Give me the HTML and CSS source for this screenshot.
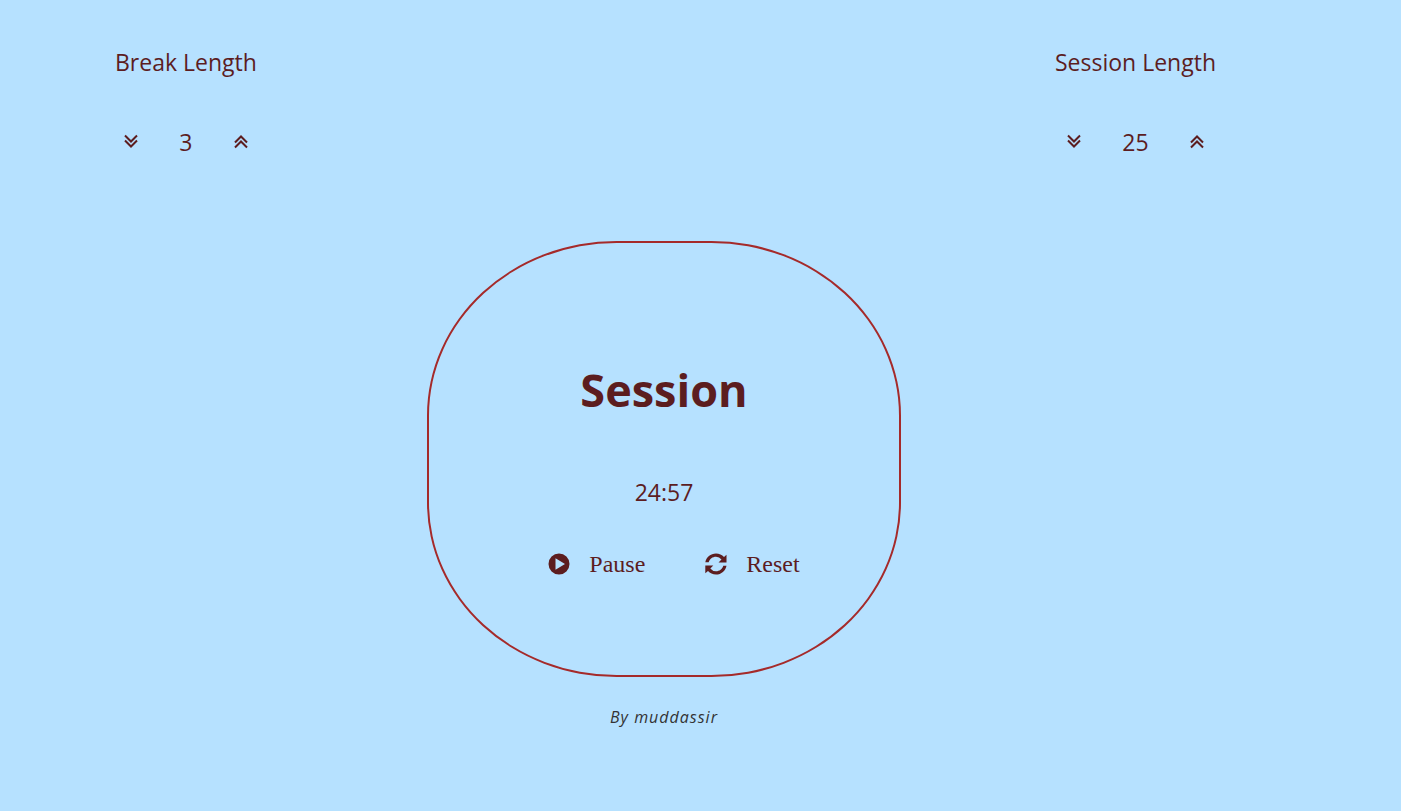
FILE: index.html
```html
<!DOCTYPE html>
<html lang="en">
<head>
<meta charset="utf-8">
<title>Session Timer</title>
<link rel="stylesheet" href="styles.css">
</head>
<body>
<header class="lengths">
  <section class="length">
    <h2 class="length-label">Break Length</h2>
    <div class="stepper">
      <button class="step" type="button" aria-label="Decrease break length"><svg class="chevrons" viewBox="0 0 16 16"><path d="M2 1.500l6 6 6-6M2 6.500l6 6 6-6"/></svg></button>
      <span class="value">3</span>
      <button class="step" type="button" aria-label="Increase break length"><svg class="chevrons" viewBox="0 0 16 16"><path d="M2 8.500l6-6 6 6M2 13.500l6-6 6 6"/></svg></button>
    </div>
  </section>
  <section class="length">
    <h2 class="length-label">Session Length</h2>
    <div class="stepper">
      <button class="step" type="button" aria-label="Decrease session length"><svg class="chevrons" viewBox="0 0 16 16"><path d="M2 1.500l6 6 6-6M2 6.500l6 6 6-6"/></svg></button>
      <span class="value">25</span>
      <button class="step" type="button" aria-label="Increase session length"><svg class="chevrons" viewBox="0 0 16 16"><path d="M2 8.500l6-6 6 6M2 13.500l6-6 6 6"/></svg></button>
    </div>
  </section>
</header>
<main class="timer">
  <h1 class="timer-label">Session</h1>
  <div class="time">24:57</div>
  <div class="controls">
    <button class="control" type="button"><svg class="icon" viewBox="0 0 22 22"><path fill-rule="evenodd" d="M11 .5a10.500 10.500 0 1 0 0 21 10.500 10.500 0 0 0 0-21zM7.500 5.200L17 11l-9.500 5.800z"/></svg>Pause</button>
    <button class="control" type="button"><svg class="icon" viewBox="0 0 22 22"><path d="M.3 9.300C1.200 4.200 5.600.5 11 .5c3.200 0 6 1.300 8 3.400l2.500-2.200v7.900h-8l3-3A7.600 7.600 0 0 0 11 3.800c-3.500 0-6.300 2.200-7.300 5.500zM21.500 12.700c-.9 5.100-5.100 8.800-10.500 8.800-3.200 0-6-1.300-8-3.400L.3 20.300v-7.900h8l-3 3a7.600 7.600 0 0 0 5.700 2.800c3.500 0 6.300-2.200 7.300-5.500z"/></svg>Reset</button>
  </div>
</main>
<footer class="credit">By muddassir</footer>
</body>
</html>
```
FILE: styles.css
```css
* {
  box-sizing: border-box;
}

body {
  margin: 0;
  padding: 44px 73px 0 0;
  background: #b6e1ff;
  color: #5c1d1f;
  font-family: "Segoe UI", "Open Sans", sans-serif;
  display: flex;
  flex-direction: column;
  align-items: center;
}

.lengths {
  width: 100%;
  padding: 0 112px 0 115px;
  display: flex;
  justify-content: space-between;
}

.length {
  display: flex;
  flex-direction: column;
  align-items: center;
  gap: 44px;
}

.length-label {
  margin: 0;
  font-size: 23px;
  line-height: 36px;
  font-weight: 400;
}

.stepper {
  display: flex;
  align-items: center;
  gap: 40px;
}

.step,
.control {
  padding: 0;
  border: 0;
  background: none;
  color: inherit;
  cursor: pointer;
}

.step {
  display: flex;
}

.chevrons {
  width: 16px;
  height: 16px;
  fill: none;
  stroke: currentColor;
  stroke-width: 2;
}

.value,
.time {
  font-size: 23px;
  line-height: 36px;
}

.timer {
  width: 474px;
  margin-top: 81px;
  padding: 115px 0 95px;
  border: 2px solid brown;
  border-radius: 40%;
  display: flex;
  flex-direction: column;
  align-items: center;
}

.timer-label {
  margin: 0 0 52px;
  font-size: 45px;
  line-height: 64px;
  font-weight: 700;
}

.controls {
  display: flex;
  gap: 60px;
  margin-top: 38px;
  padding-left: 20px;
}

.control {
  display: flex;
  align-items: center;
  gap: 19px;
  font-family: "Liberation Serif", serif;
  font-size: 24px;
  line-height: 32px;
}

.icon {
  width: 22px;
  height: 22px;
  fill: currentColor;
}

.credit {
  margin-top: 28px;
  color: #333;
  font-family: "Open Sans", sans-serif;
  font-size: 16px;
  font-style: italic;
  line-height: 24px;
  letter-spacing: 1px;
}
```
